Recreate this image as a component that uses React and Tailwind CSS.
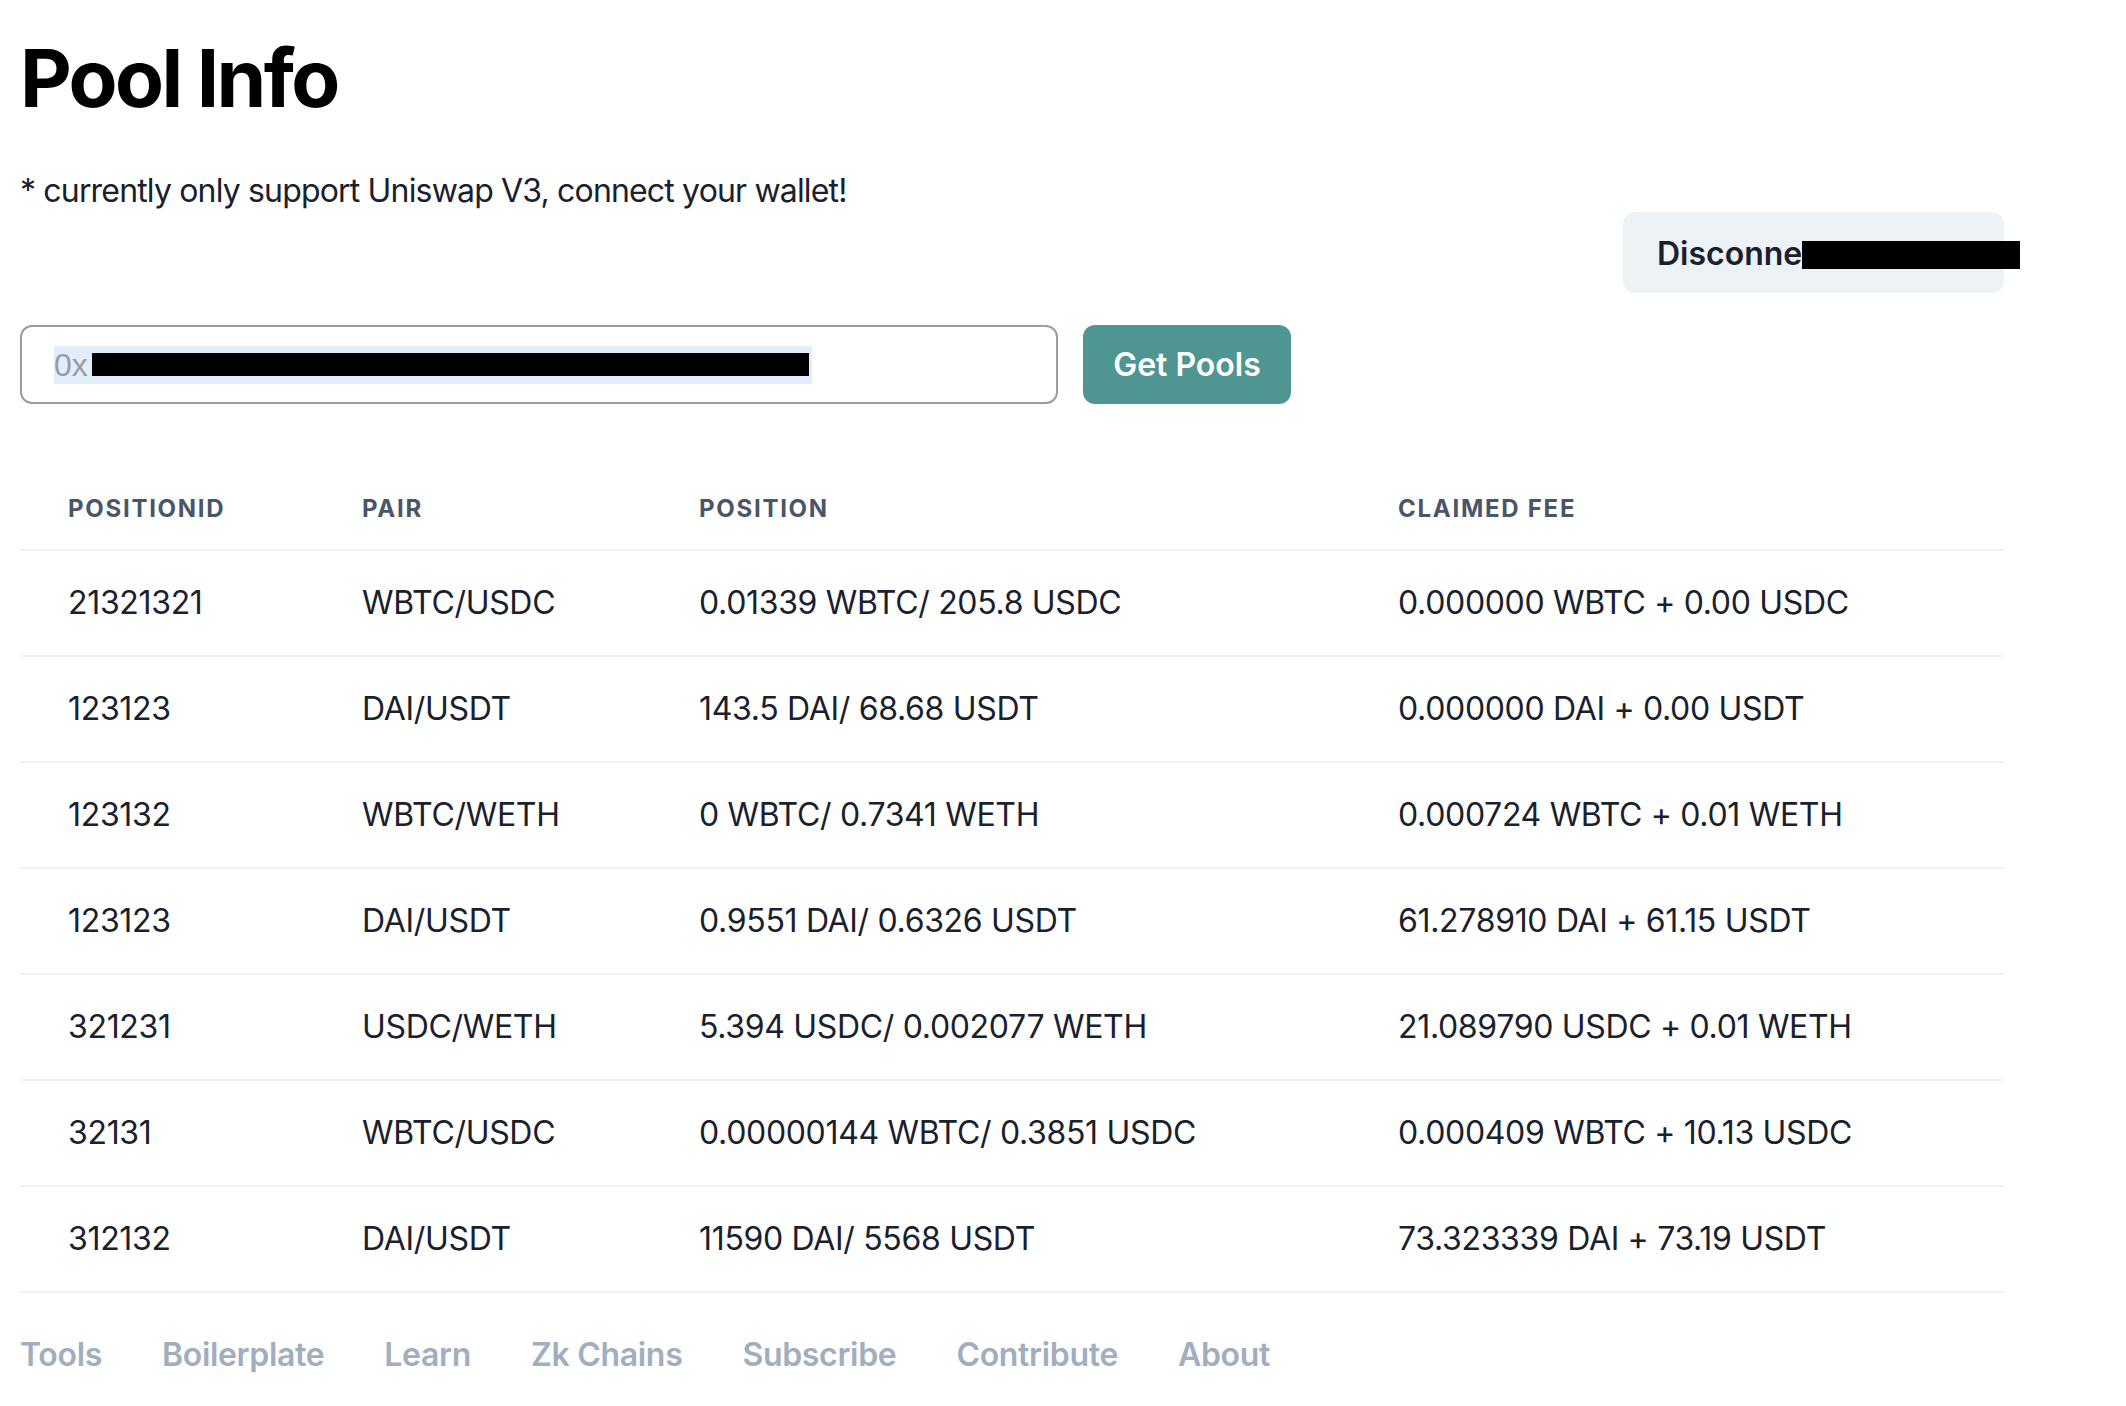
const rows = [
  { id: "21321321", pair: "WBTC/USDC", position: "0.01339 WBTC/ 205.8 USDC", fee: "0.000000 WBTC + 0.00 USDC" },
  { id: "123123", pair: "DAI/USDT", position: "143.5 DAI/ 68.68 USDT", fee: "0.000000 DAI + 0.00 USDT" },
  { id: "123132", pair: "WBTC/WETH", position: "0 WBTC/ 0.7341 WETH", fee: "0.000724 WBTC + 0.01 WETH" },
  { id: "123123", pair: "DAI/USDT", position: "0.9551 DAI/ 0.6326 USDT", fee: "61.278910 DAI + 61.15 USDT" },
  { id: "321231", pair: "USDC/WETH", position: "5.394 USDC/ 0.002077 WETH", fee: "21.089790 USDC + 0.01 WETH" },
  { id: "32131", pair: "WBTC/USDC", position: "0.00000144 WBTC/ 0.3851 USDC", fee: "0.000409 WBTC + 10.13 USDC" },
  { id: "312132", pair: "DAI/USDT", position: "11590 DAI/ 5568 USDT", fee: "73.323339 DAI + 73.19 USDT" },
];

const links = ["Tools", "Boilerplate", "Learn", "Zk Chains", "Subscribe", "Contribute", "About"];

const headers = ["PositionId", "Pair", "Position", "Claimed Fee"];

const App = () => {
  return (
    <div className="min-h-screen bg-white font-['Inter',sans-serif] text-[#1a202c] tracking-[-0.02em]">
      <div className="ml-[20px] w-[1984px] pt-[38px]">
        <h1 className="text-[80px] leading-[80px] font-bold tracking-[-0.033em] text-black">Pool Info</h1>

        <p className="mt-[49px] text-[32px] leading-[48px] tracking-[-0.026em]">
          * currently only support Uniswap V3, connect your wallet!
        </p>

        <div className="flex justify-end">
          <button
            type="button"
            className="-mt-[3px] w-[381px] h-[81px] rounded-[12px] bg-[#edf2f7] pl-[34px] pt-[2px] text-left text-[32px] leading-[32px] font-semibold tracking-normal whitespace-nowrap text-[#1a202c]"
          >
            Disconne
            <span className="inline-block align-[-4px] w-[218px] h-[28px] bg-black"></span>
          </button>
        </div>

        <div className="mt-[32px] flex items-center gap-[25px]">
          <div className="w-[1038px] h-[79px] rounded-[12px] border-2 border-[#9c9c9c] pl-[32px] flex items-center">
            <span className="flex items-center h-[38px] bg-[#e2edfc] font-['Liberation_Sans',sans-serif] text-[32px] tracking-normal text-[#9c9c9c]">
              0x
              <span className="ml-[4px] inline-block w-[717px] h-[23px] bg-black"></span>
              <span className="w-[3px]"></span>
            </span>
          </div>
          <button
            type="button"
            className="w-[208px] h-[79px] rounded-[12px] bg-[#4f9692] text-[32px] font-semibold tracking-normal text-white"
          >
            Get Pools
          </button>
        </div>

        <table className="mt-[65px] w-full table-fixed border-collapse">
          <colgroup>
            <col className="w-[294px]" />
            <col className="w-[337px]" />
            <col className="w-[699px]" />
            <col />
          </colgroup>
          <thead>
            <tr className="border-b-2 border-[#edf2f7]">
              {headers.map((h) => (
                <th
                  key={h}
                  className="px-[48px] py-[24px] text-left text-[24px] leading-[32px] font-bold uppercase tracking-[0.072em] text-[#4a5568]"
                >
                  {h}
                </th>
              ))}
            </tr>
          </thead>
          <tbody>
            {rows.map((r, i) => (
              <tr key={i} className="border-b-2 border-[#edf2f7] text-[32px] leading-[40px]">
                <td className="px-[48px] py-[32px]">{r.id}</td>
                <td className="px-[48px] py-[32px]">{r.pair}</td>
                <td className="px-[48px] py-[32px]">{r.position}</td>
                <td className="px-[48px] py-[32px]">{r.fee}</td>
              </tr>
            ))}
          </tbody>
        </table>

        <div className="mt-[38px] flex gap-[60px] text-[32px] leading-[48px] font-semibold text-[#a0aec0]">
          {links.map((l) => (
            <a key={l} href="#">
              {l}
            </a>
          ))}
        </div>
      </div>
    </div>
  );
};

export default App;
